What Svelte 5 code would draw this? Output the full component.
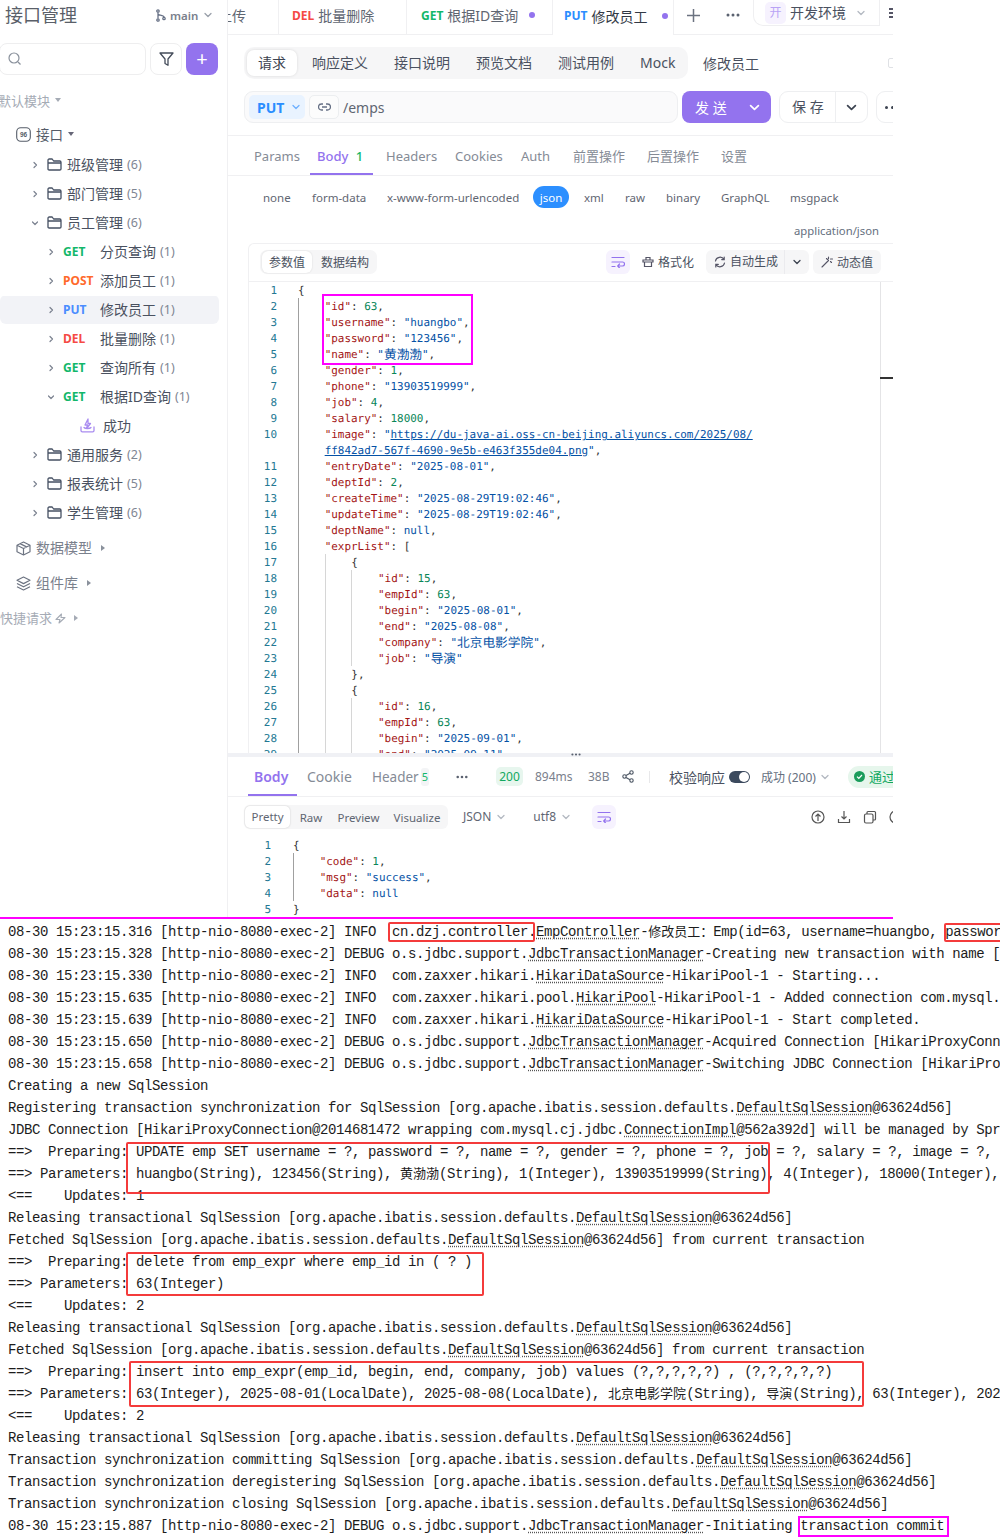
<script>
  const tree = [
    { k: 'f', open: false, name: '班级管理', c: 6 },
    { k: 'f', open: false, name: '部门管理', c: 5 },
    { k: 'f', open: true, name: '员工管理', c: 6 },
    { k: 'm', m: 'GET', name: '分页查询', c: 1 },
    { k: 'm', m: 'POST', name: '添加员工', c: 1 },
    { k: 'm', m: 'PUT', name: '修改员工', c: 1, sel: true },
    { k: 'm', m: 'DEL', name: '批量删除', c: 1 },
    { k: 'm', m: 'GET', name: '查询所有', c: 1 },
    { k: 'm', m: 'GET', name: '根据ID查询', c: 1, open: true },
    { k: 's', name: '成功' },
    { k: 'f', open: false, name: '通用服务', c: 2 },
    { k: 'f', open: false, name: '报表统计', c: 5 },
    { k: 'f', open: false, name: '学生管理', c: 6 }
  ];
  const reqTabs = ['响应定义', '接口说明', '预览文档', '测试用例', 'Mock'];
  function tok(s) {
    const out = [];
    const re = /("[^"]*")(:?)|(\d+)|(null)|([^"\d n]+|\s+|n)/g;
    let m;
    while ((m = re.exec(s))) {
      if (m[1]) {
        if (m[2]) {
          out.push(['k', m[1]]);
          out.push(['q', ':']);
        } else {
          for (const part of m[1].split(/([\u4e00-\u9fff]+)/)) {
            if (part) out.push([/[\u4e00-\u9fff]/.test(part) ? 'v vz' : 'v', part]);
          }
        }
      } else if (m[3]) out.push(['d', m[3]]);
      else if (m[4]) out.push(['v', m[4]]);
      else out.push(['q', m[0]]);
    }
    return out;
  }
  const reqRaw = [
    [1, 0, '{'], [2, 1, '"id": 63,'], [3, 1, '"username": "huangbo",'], [4, 1, '"password": "123456",'],
    [5, 1, '"name": "黄渤渤",'], [6, 1, '"gender": 1,'], [7, 1, '"phone": "13903519999",'], [8, 1, '"job": 4,'],
    [9, 1, '"salary": 18000,'], [10, 1, 'URL1'], ['', 1, 'URL2'], [11, 1, '"entryDate": "2025-08-01",'],
    [12, 1, '"deptId": 2,'], [13, 1, '"createTime": "2025-08-29T19:02:46",'], [14, 1, '"updateTime": "2025-08-29T19:02:46",'],
    [15, 1, '"deptName": null,'], [16, 1, '"exprList": ['], [17, 2, '{'], [18, 3, '"id": 15,'], [19, 3, '"empId": 63,'],
    [20, 3, '"begin": "2025-08-01",'], [21, 3, '"end": "2025-08-08",'], [22, 3, '"company": "北京电影学院",'], [23, 3, '"job": "导演"'],
    [24, 2, '},'], [25, 2, '{'], [26, 3, '"id": 16,'], [27, 3, '"empId": 63,'], [28, 3, '"begin": "2025-09-01",'], [29, 3, '"end": "2025-09-11",']
  ];
  const reqRows = reqRaw.map(([n, ind, t]) => ({
    n, ind,
    toks: t === 'URL1'
      ? [['k', '"image"'], ['q', ': '], ['v', '"'], ['u', 'https://du-java-ai.oss-cn-beijing.aliyuncs.com/2025/08/']]
      : t === 'URL2'
        ? [['u', 'ff842ad7-567f-4690-9e5b-e463f355de04.png'], ['v', '"'], ['q', ',']]
        : tok(t)
  }));
  const resRows = [
    [1, 0, '{'], [2, 1, '"code": 1,'], [3, 1, '"msg": "success",'], [4, 1, '"data": null'], [5, 0, '}']
  ].map(([n, ind, t]) => ({ n, ind, toks: tok(t) }));

  const log = [
    ['08-30 15:23:15.316 [http-nio-8080-exec-2] INFO  cn.dzj.controller.', 'EmpController', '-', '修改员工：', 'Emp(id=63, username=huangbo, password=123456, name=黄渤渤'],
    ['08-30 15:23:15.328 [http-nio-8080-exec-2] DEBUG o.s.jdbc.support.', 'JdbcTransactionManager', '-Creating new transaction with name [cn.dzj.service'],
    ['08-30 15:23:15.330 [http-nio-8080-exec-2] INFO  com.zaxxer.hikari.', 'HikariDataSource', '-HikariPool-1 - Starting...'],
    ['08-30 15:23:15.635 [http-nio-8080-exec-2] INFO  com.zaxxer.hikari.pool.', 'HikariPool', '-HikariPool-1 - Added connection com.mysql.cj.jdbc'],
    ['08-30 15:23:15.639 [http-nio-8080-exec-2] INFO  com.zaxxer.hikari.', 'HikariDataSource', '-HikariPool-1 - Start completed.'],
    ['08-30 15:23:15.650 [http-nio-8080-exec-2] DEBUG o.s.jdbc.support.', 'JdbcTransactionManager', '-Acquired Connection [HikariProxyConnection@2014'],
    ['08-30 15:23:15.658 [http-nio-8080-exec-2] DEBUG o.s.jdbc.support.', 'JdbcTransactionManager', '-Switching JDBC Connection [HikariProxyConnection'],
    ['Creating a new SqlSession'],
    ['Registering transaction synchronization for SqlSession [org.apache.ibatis.session.defaults.', 'DefaultSqlSession', '@63624d56]'],
    ['JDBC Connection [HikariProxyConnection@2014681472 wrapping com.mysql.cj.jdbc.', 'ConnectionImpl', '@562a392d] will be managed by Spring'],
    ['==>  Preparing: UPDATE emp SET username = ?, password = ?, name = ?, gender = ?, phone = ?, job = ?, salary = ?, image = ?, dept'],
    ['==> Parameters: huangbo(String), 123456(String), ', '', '', '黄渤渤', '(String), 1(Integer), 13903519999(String), 4(Integer), 18000(Integer), https'],
    ['<==    Updates: 1'],
    ['Releasing transactional SqlSession [org.apache.ibatis.session.defaults.', 'DefaultSqlSession', '@63624d56]'],
    ['Fetched SqlSession [org.apache.ibatis.session.defaults.', 'DefaultSqlSession', '@63624d56] from current transaction'],
    ['==>  Preparing: delete from emp_expr where emp_id in ( ? )'],
    ['==> Parameters: 63(Integer)'],
    ['<==    Updates: 2'],
    ['Releasing transactional SqlSession [org.apache.ibatis.session.defaults.', 'DefaultSqlSession', '@63624d56]'],
    ['Fetched SqlSession [org.apache.ibatis.session.defaults.', 'DefaultSqlSession', '@63624d56] from current transaction'],
    ['==>  Preparing: insert into emp_expr(emp_id, begin, end, company, job) values (?,?,?,?,?) , (?,?,?,?,?)'],
    ['==> Parameters: 63(Integer), 2025-08-01(LocalDate), 2025-08-08(LocalDate), ', '', '', '北京电影学院', '(String), ', '导演', '(String), 63(Integer), 2025-09-01'],
    ['<==    Updates: 2'],
    ['Releasing transactional SqlSession [org.apache.ibatis.session.defaults.', 'DefaultSqlSession', '@63624d56]'],
    ['Transaction synchronization committing SqlSession [org.apache.ibatis.session.defaults.', 'DefaultSqlSession', '@63624d56]'],
    ['Transaction synchronization deregistering SqlSession [org.apache.ibatis.session.defaults.', 'DefaultSqlSession', '@63624d56]'],
    ['Transaction synchronization closing SqlSession [org.apache.ibatis.session.defaults.', 'DefaultSqlSession', '@63624d56]'],
    ['08-30 15:23:15.887 [http-nio-8080-exec-2] DEBUG o.s.jdbc.support.', 'JdbcTransactionManager', '-Initiating transaction commit']
  ];
</script>

{#snippet chev(cls)}
  <svg class={cls} width="10" height="10" viewBox="0 0 10 10" fill="none" stroke="currentColor" stroke-width="1.3" stroke-linecap="round" stroke-linejoin="round"><path d="M2 3.5 5 6.5 8 3.5"/></svg>
{/snippet}
{#snippet wrapIcon()}
  <svg width="14" height="12" viewBox="0 0 14 12" fill="none" stroke="#9373ee" stroke-width="1.2" stroke-linecap="round" stroke-linejoin="round"><path d="M1 1.5h12M1 6h10.5a1.5 1.5 0 0 1 0 4H7M8.5 8 6.7 10l1.8 2M1 10.500h3"/></svg>
{/snippet}
{#snippet threeDots(cls)}
  <svg class={cls} width="14" height="4" viewBox="0 0 14 4" fill="#5b6270"><circle cx="2" cy="2" r="1.500"/><circle cx="7" cy="2" r="1.500"/><circle cx="12" cy="2" r="1.500"/></svg>
{/snippet}
{#snippet rows(list)}
  {#each list as r}
    <div class="row">
      <span class="ln">{r.n}</span>
      <span class="code">{#each Array(r.ind) as _, i}<span class="ind" class:first={i === 0}></span>{/each}{#each r.toks as t}<span class={t[0]}>{t[1]}</span>{/each}</span>
    </div>
  {/each}
{/snippet}

<div class="page">
  <div class="top">
    <aside class="side">
      <div class="s-head">
        <span class="title">接口管理</span>
        <svg class="branch" width="12" height="13" viewBox="0 0 12 13" fill="none" stroke="#667085" stroke-width="1.3"><circle cx="3" cy="2" r="1.2"/><circle cx="3" cy="11" r="1.2"/><circle cx="9" cy="9.500" r="1.200"/><path d="M3 3.500v6M3 5c1 2 6 1 6 3.200"/></svg>
        <span class="main-t">main</span>
        {@render chev('ch-main')}
      </div>
      <div class="s-search">
        <div class="s-input">
          <svg width="14" height="14" viewBox="0 0 14 14" fill="none" stroke="#8a919c" stroke-width="1.2"><circle cx="6" cy="6" r="5"/><path d="m10 10 2.500 2.500"/></svg>
        </div>
        <div class="s-filter">
          <svg width="15" height="14" viewBox="0 0 15 14" fill="none" stroke="#444c5a" stroke-width="1.3" stroke-linejoin="round"><path d="M1 1h13L9 7v6.300L6 11.500V7z"/></svg>
        </div>
        <div class="s-plus">+</div>
      </div>
      <div class="s-mod"><span>默认模块</span><i class="caret-d"></i></div>
      <div class="s-api">
        <svg width="15" height="15" viewBox="0 0 15 15" fill="none" stroke="#555c68" stroke-width="1.100"><rect x=".7" y=".7" width="13.600" height="13.600" rx="4"/><text x="7.500" y="9.800" font-size="6.500" fill="#555c68" stroke="none" text-anchor="middle" font-family="Liberation Sans" font-weight="700">96</text></svg>
        <span>接口</span><i class="caret-d dark"></i>
      </div>
      <div class="tree">
        {#each tree as t}
          {#if t.k === 'f'}
            <div class="t-row f">
              <svg class="arr" class:down={t.open} width="8" height="8" viewBox="0 0 8 8" fill="none" stroke="#7b8290" stroke-width="1.200" stroke-linecap="round" stroke-linejoin="round"><path d="M3 1.500 5.500 4 3 6.500"/></svg>
              <svg class="folder" width="15" height="13" viewBox="0 0 15 13" fill="none" stroke="#465063" stroke-width="1.300" stroke-linejoin="round"><path d="M1 11V2.200C1 1.500 1.500 1 2.200 1h3l1.400 2h6.200c.7 0 1.200.5 1.200 1.200V11c0 .6-.5 1-1.200 1H2.200C1.500 12 1 11.600 1 11zM1 5h13"/></svg>
              <span class="nm">{t.name}</span><span class="ct">({t.c})</span>
            </div>
          {:else if t.k === 'm'}
            <div class="t-row m" class:sel={t.sel}>
              <svg class="arr" class:down={t.open} width="8" height="8" viewBox="0 0 8 8" fill="none" stroke="#7b8290" stroke-width="1.200" stroke-linecap="round" stroke-linejoin="round"><path d="M3 1.500 5.500 4 3 6.500"/></svg>
              <span class="mth {t.m}">{t.m}</span>
              <span class="nm">{t.name}</span><span class="ct">({t.c})</span>
            </div>
          {:else}
            <div class="t-row s">
              <svg width="15" height="15" viewBox="0 0 15 15" fill="none" stroke="#a98cf0" stroke-width="1.300" stroke-linejoin="round" stroke-linecap="round"><path d="M1 9v3.500c0 .8.500 1.300 1.300 1.300h10.400c.8 0 1.300-.5 1.300-1.300V9M4 9.500c1 1.300 6 1.300 7 0M8 1 5 7h2.500L6.500 10.500 10.500 5.500H8z"/></svg>
              <span class="nm">{t.name}</span>
            </div>
          {/if}
        {/each}
      </div>
      <div class="s-sec first">
        <svg width="15" height="15" viewBox="0 0 15 15" fill="none" stroke="#6d7482" stroke-width="1.200" stroke-linejoin="round"><path d="M7.500 1 14 4.300v6.400L7.500 14 1 10.700V4.300zM1 4.300l6.500 3.200L14 4.300M7.500 7.500V14M4 2.600l6.500 3.300"/></svg>
        <span class="nm">数据模型</span><i class="caret-r"></i>
      </div>
      <div class="s-sec">
        <svg width="15" height="15" viewBox="0 0 15 15" fill="none" stroke="#6d7482" stroke-width="1.200" stroke-linejoin="round"><path d="M7.500 1 14 4.300 7.500 7.600 1 4.300zM1 7.500l6.500 3.300L14 7.500M1 10.700 7.500 14l6.500-3.300"/></svg>
        <span class="nm">组件库</span><i class="caret-r"></i>
      </div>
      <div class="s-quick">
        <span class="nm">快捷请求</span>
        <svg width="11" height="11" viewBox="0 0 11 11" fill="none" stroke="#a5abb5" stroke-width="1.100" stroke-linejoin="round"><path d="M6.500 1 1 6.500h4L4 10l6-5.500H6z"/></svg>
        <i class="caret-r"></i>
      </div>
    </aside>

    <main class="main">
      <div class="tabbar">
        <div class="tab t1"><span class="clip">上传</span></div>
        <div class="tab t2"><b class="DEL">DEL</b> <span>批量删除</span></div>
        <div class="tab t3"><b class="GET">GET</b> <span>根据ID查询</span><i class="dot"></i></div>
        <div class="tab t4"><b class="PUTT">PUT</b> <span class="act">修改员工</span><i class="dot"></i></div>
        <svg class="plus" width="13" height="13" viewBox="0 0 13 13" stroke="#6b7280" stroke-width="1.500"><path d="M6.500 0v13M0 6.500h13"/></svg>
        {@render threeDots('tdots')}
        <div class="env">
          <span class="env-chip">开</span><span class="env-t">开发环境</span>
          {@render chev('ch-env')}
        </div>
        <div class="env-more"><i></i><i></i><i></i></div>
      </div>

      <div class="reqrow">
        <div class="reqtabs">
          <span class="rt active">请求</span>
          {#each reqTabs as r}<span class="rt">{r}</span>{/each}
        </div>
        <span class="rname">修改员工</span>
        <span class="ricon"></span>
      </div>

      <div class="urlrow">
        <div class="urlbox">
          <span class="put">PUT {@render chev('ch-put')}</span>
          <span class="link">
            <svg width="13" height="8" viewBox="0 0 13 8" fill="none" stroke="#667085" stroke-width="1.300"><path d="M5 1H3.500a3 3 0 0 0 0 6H5M8 1h1.500a3 3 0 0 1 0 6H8M4 4h5"/></svg>
          </span>
          <span class="path">/emps</span>
        </div>
        <div class="send"><span>发 送</span>{@render chev('ch-send')}</div>
        <div class="save"><span class="save-t">保 存</span><span class="save-c">{@render chev('ch-save')}</span></div>
        <div class="more"><i></i><i></i></div>
      </div>

      <div class="ptabs">
        <span class="pt pa">Params</span>
        <span class="pt pb">Body <em>1</em></span>
        <span class="pt pc">Headers</span>
        <span class="pt pd">Cookies</span>
        <span class="pt pe">Auth</span>
        <span class="pt pf">前置操作</span>
        <span class="pt pg">后置操作</span>
        <span class="pt ph">设置</span>
      </div>

      <div class="btypes">
        <span class="bt b0">none</span><span class="bt b1">form-data</span><span class="bt b2">x-www-form-urlencoded</span>
        <span class="bt b3">json</span><span class="bt b4">xml</span><span class="bt b5">raw</span><span class="bt b6">binary</span>
        <span class="bt b7">GraphQL</span><span class="bt b8">msgpack</span>
      </div>
      <div class="ctype">application/json</div>

      <div class="editor">
        <div class="toolbar">
          <div class="seg">
            <span class="sg active">参数值</span><span class="sg">数据结构</span>
          </div>
          <span class="wrapbtn wb1">{@render wrapIcon()}</span>
          <span class="fmt">
            <svg width="12" height="12" viewBox="0 0 12 12" fill="none" stroke="#556" stroke-width="1.200"><path d="M1 4h10v2H1zM2.500 6v4.500h7V6M4 4V1.500h4V4"/></svg>
            格式化
          </span>
          <span class="auto">
            <span class="auto-l">
              <svg width="12" height="12" viewBox="0 0 12 12" fill="none" stroke="#556" stroke-width="1.200" stroke-linecap="round"><path d="M1.500 5A4.600 4.600 0 0 1 10 3.500M10.500 7A4.600 4.600 0 0 1 2 8.500M10.200 1v2.600H7.700M1.800 11V8.400h2.500"/></svg>
              自动生成
            </span>
            <span class="auto-r">{@render chev('ch-auto')}</span>
          </span>
          <span class="dyn">
            <svg width="12" height="12" viewBox="0 0 12 12" fill="none" stroke="#556" stroke-width="1.100" stroke-linecap="round"><path d="M1 11 7.500 4.500M7.500 1v2M9.500 3h2M5.500 2.500 6.500 3.500M9.500 5.500l1 1"/></svg>
            动态值
          </span>
        </div>
        <div class="req-code">
          {@render rows(reqRows)}
          <i class="ruler"></i>
        </div>
      </div>
      <div class="resizer">{@render threeDots('rzdots')}</div>

      <div class="rtabs">
        <span class="rb">Body</span>
        <span class="rc">Cookie</span>
        <span class="rh">Header</span><em class="rn">5</em>
        {@render threeDots('rdots')}
        <span class="c200">200</span>
        <span class="rm r894">894ms</span>
        <span class="rm r38">38B</span>
        <svg class="share" width="12" height="13" viewBox="0 0 12 13" fill="none" stroke="#4b5563" stroke-width="1.100"><circle cx="9.500" cy="2.500" r="1.700"/><circle cx="2.500" cy="6.500" r="1.700"/><circle cx="9.500" cy="10.500" r="1.700"/><path d="M4 5.600 8 3.300M4 7.400l4 2.300"/></svg>
        <i class="rsep"></i>
        <span class="chk">校验响应</span>
        <span class="toggle"><i></i></span>
        <span class="succ">成功 (200)</span>
        {@render chev('ch-succ')}
        <span class="pass"><svg width="11" height="11" viewBox="0 0 11 11"><circle cx="5.500" cy="5.500" r="5.500" fill="#1a9c5b"/><path d="M3 5.600 4.800 7.300 8 4" fill="none" stroke="#fff" stroke-width="1.200"/></svg>通过</span>
      </div>

      <div class="resbar">
        <div class="rseg">
          <span class="rs active">Pretty</span><span class="rs">Raw</span><span class="rs">Preview</span><span class="rs">Visualize</span>
        </div>
        <span class="rsel s1">JSON</span>{@render chev('ch-s1')}
        <span class="rsel s2">utf8</span>{@render chev('ch-s2')}
        <span class="wrapbtn wb2">{@render wrapIcon()}</span>
        <span class="res-ic">
          <svg width="14" height="14" viewBox="0 0 14 14" fill="none" stroke="#555" stroke-width="1.200"><circle cx="7" cy="7" r="6"/><path d="M7 11V4M4.500 6.500 7 4l2.500 2.500"/></svg>
          <svg width="14" height="14" viewBox="0 0 14 14" fill="none" stroke="#555" stroke-width="1.200"><path d="M7 1v8M4.500 6.500 7 9l2.500-2.500M1.500 9v3.500h11V9"/></svg>
          <svg width="14" height="14" viewBox="0 0 14 14" fill="none" stroke="#555" stroke-width="1.200"><rect x="1.500" y="4" width="8.500" height="9" rx="1.500"/><path d="M4 4V2.500c0-.6.400-1 1-1h6.500c.6 0 1 .4 1 1V9c0 .6-.4 1-1 1H10"/></svg>
          <svg width="14" height="14" viewBox="0 0 14 14" fill="none" stroke="#555" stroke-width="1.200"><circle cx="7" cy="7" r="6"/></svg>
        </span>
      </div>

      <div class="res-code">{@render rows(resRows)}</div>
    </main>
  </div>

  <div class="sep"></div>

  <div class="log">
    {#each log as l}
      <div class="lg">{l[0]}{#if l[1]}<span class="dt">{l[1]}</span>{/if}{#if l[2]}{l[2]}{/if}{#if l[3]}<span class="zh">{l[3]}</span>{/if}{#if l[4]}{l[4]}{/if}{#if l[5]}<span class="zh">{l[5]}</span>{/if}{#if l[6]}{l[6]}{/if}</div>
    {/each}
  </div>

  <i class="box mg a1"></i>
  <i class="box rd a2"></i>
  <i class="box rd a3"></i>
  <i class="box rd a4"></i>
  <i class="box rd a5"></i>
  <i class="box rd a6"></i>
  <i class="box mg a7"></i>
</div>

<style>
  :global(body) { margin: 0; background: #fff; }
  .page {
    position: relative; width: 1000px; height: 1540px; overflow: hidden; background: #fff;
    font-family: "Noto Sans", "Noto Sans CJK SC", sans-serif; color: #4a5160;
  }
  .top { display: flex; width: 893px; height: 917px; overflow: hidden; }
  svg { flex: none; }
  i, em, b { font-style: normal; }

  /* sidebar */
  .side { width: 227px; flex: none; border-right: 1px solid #f0f0f2; overflow: hidden; }
  .s-head { display: flex; align-items: center; height: 30px; padding-left: 5px; }
  .title { font-size: 18px; color: #5a5f69; width: 150px; line-height: 30px; }
  .main-t { font-size: 11.500px; font-weight: 600; color: #7a808c; margin-left: 3px; }
  .ch-main { color: #9aa0aa; margin-left: 5px; }
  .s-search { display: flex; margin-top: 13px; height: 32px; gap: 4px; }
  .s-input {
    width: 147px; margin-left: -1px; box-sizing: border-box; border: 1px solid #eeeeef; border-radius: 8px;
    display: flex; align-items: center; padding-left: 8px;
  }
  .s-filter { width: 32px; box-sizing: border-box; border: 1px solid #eeeeef; border-radius: 8px; display: flex; align-items: center; justify-content: center; }
  .s-plus { width: 32px; background: #9373ee; border-radius: 8px; color: #fff; font-size: 20px; line-height: 31px; text-align: center; }
  .s-mod { display: flex; align-items: center; height: 20px; margin: 15px 0 0 -2px; font-size: 13px; color: #a5abb5; gap: 5px; }
  .caret-d { width: 0; height: 0; border: 3px solid transparent; border-top: 4px solid #a5abb5; border-bottom: 0; }
  .caret-d.dark { border-top-color: #667; }
  .s-api { display: flex; align-items: center; height: 20px; margin: 14px 0 0 16px; font-size: 13.500px; color: #555c68; gap: 5px; }
  .caret-r { width: 0; height: 0; border: 3px solid transparent; border-left: 4px solid #8a919c; border-right: 0; }
  .tree { margin-top: 6px; }
  .t-row { display: flex; align-items: center; height: 29px; font-size: 14px; color: #4a5160; }
  .nm { margin-bottom: 2px; white-space: nowrap; }
  .t-row .ct { font-size: 12.500px; color: #7f8693; margin-left: 4px; margin-bottom: 1px; }
  .t-row.f { padding-left: 31px; }
  .t-row.f .arr { margin-right: 8px; }
  .t-row.f .nm { margin-left: 5px; }
  .t-row.m { padding-left: 47px; margin-right: 8px; }
  .t-row.m .arr { margin-right: 8px; }
  .t-row.sel { background: linear-gradient(#fff 1px, #f2f3f7 1px); border-radius: 6px; }
  .arr.down { transform: rotate(90deg); }
  .mth { width: 37px; flex: none; font-size: 12px; font-weight: 700; }
  .GET { color: #12b76a; } .POST { color: #ff6a2b; } .PUT { color: #4b8dff; } .DEL { color: #f54a45; }
  .PUTT { color: #2a8dff; }
  .t-row.s { padding-left: 80px; gap: 8px; }
  .s-sec { display: flex; align-items: center; height: 20px; margin: 15px 0 0 16px; font-size: 14px; color: #7a808c; gap: 5px; }
  .s-sec.first { margin-top: 11px; }
  .s-sec .caret-r { margin-left: 4px; }
  .s-quick { display: flex; align-items: center; height: 20px; margin-top: 15px; font-size: 13px; color: #a5abb5; gap: 3px; }
  .s-quick .caret-r { margin-left: 5px; border-left-color: #a5abb5; }

  /* main */
  .main { width: 665px; flex: none; overflow: hidden; }
  .tabbar { display: flex; align-items: flex-start; height: 34px; border-bottom: 1px solid #f0f0f2; font-size: 14px; }
  .tabbar > * { flex: none; }
  .tab { height: 34px; box-sizing: border-box; padding-bottom: 4px; display: flex; align-items: center; white-space: nowrap; overflow: hidden; }
  .tab b { font-size: 12px; margin-right: 4px; }
  .tab span { color: #5f6672; }
  .t1 { width: 51px; border-right: 1px solid #f0f0f2; padding-left: 4px; box-sizing: border-box; }
  .clip { margin-left: -14px; }
  .t2 { width: 128px; padding-left: 13px; border-right: 1px solid #f0f0f2; }
  .t3 { width: 145px; padding-left: 14px; }
  .t3 .dot { margin-left: 11px; }
  .t4 { width: 122px; height: 35px; padding-left: 11px; background: #fff; border-left: 1px solid #f0f0f2; border-right: 1px solid #f0f0f2; }
  .tab .act { color: #333a46; }
  .t4 .dot { margin-left: 15px; }
  .dot { width: 6px; height: 6px; border-radius: 50%; background: #9373ee; flex: none; }
  .plus { margin: 9px 0 0 13px; }
  .tdots { margin: 13px 0 0 26px; }
  .env {
    width: 127px; height: 26px; box-sizing: border-box; border: 1px solid #efeff1; border-top: 0;
    border-radius: 0 0 0 10px; display: flex; align-items: center; padding-left: 11px; margin-left: 13px;
  }
  .env-chip { width: 21px; height: 22px; background: #f6f2fe; border-radius: 5px; color: #b9a3f5; font-size: 12px; line-height: 22px; text-align: center; }
  .env-t { margin-left: 4px; font-size: 14px; color: #4a5160; line-height: 22px; }
  .ch-env { color: #b4b9c2; margin-left: 10px; }
  .env-more { display: flex; flex-direction: column; gap: 2px; margin: 8px 0 0 9px; }
  .env-more i { width: 4px; height: 2px; background: #556; }

  .reqrow { display: flex; align-items: center; margin: 12px 0 0 16px; height: 32px; }
  .reqrow > * { flex: none; }
  .reqtabs { width: 444px; height: 32px; box-sizing: border-box; background: #f6f6f7; border-radius: 10px; display: flex; align-items: center; padding-left: 3px; font-size: 14px; }
  .rt { width: 82px; flex: none; text-align: left; color: #4a5160; line-height: 26px; white-space: nowrap; }
  .rt:last-child { width: 48px; }
  .rt.active { width: 50px; margin-right: 15px; text-align: center; background: #fff; border-radius: 7px; box-shadow: 0 0 3px #0000001f; color: #3c4350; }
  .rname { margin-left: 15px; font-size: 14px; color: #4a5160; white-space: nowrap; }
  .ricon { width: 7px; height: 10px; border: 1px solid #dfe1e5; border-radius: 2px; margin-left: 129px; box-sizing: border-box; }

  .urlrow { display: flex; margin: 12px 0 0 16px; height: 32px; }
  .urlrow > * { flex: none; }
  .urlbox { width: 434px; box-sizing: border-box; border: 1px solid #eeeff1; background: #fafafb; border-radius: 9px; display: flex; align-items: center; padding-left: 4px; }
  .put { width: 56px; height: 24px; flex: none; box-sizing: border-box; padding-left: 8px; background: #e9f3ff; border-radius: 5px; color: #2a8dff; font-weight: 700; font-size: 14px; line-height: 23px; display: flex; align-items: center; gap: 7px; }
  .ch-put { color: #6fb0ff; }
  .link { width: 30px; height: 24px; flex: none; box-sizing: border-box; border: 1px solid #eceef0; border-radius: 5px; margin-left: 4px; display: flex; align-items: center; justify-content: center; background: #fcfcfc; }
  .path { margin-left: 4px; font-size: 14px; color: #5f6672; }
  .send { width: 89px; margin-left: 4px; background: #9373ee; border-radius: 8px; color: #fff; font-size: 14px; display: flex; align-items: center; padding-left: 13px; box-sizing: border-box; }
  .ch-send { color: #fff; width: 13px; height: 13px; margin-left: 21px; }
  .save { width: 89px; margin-left: 8px; box-sizing: border-box; border: 1px solid #eeeff1; border-radius: 9px; display: flex; align-items: center; }
  .save-t { width: 56px; padding-left: 12px; box-sizing: border-box; font-size: 14px; color: #4a5160; line-height: 30px; border-right: 1px solid #eeeff1; white-space: nowrap; }
  .save-c { flex: 1; display: flex; justify-content: center; }
  .ch-save { color: #3c4350; width: 13px; height: 13px; }
  .more { width: 40px; margin-left: 8px; box-sizing: border-box; border: 1px solid #eeeff1; border-radius: 9px; display: flex; align-items: center; padding-left: 8px; gap: 3px; }
  .more i { width: 3px; height: 3px; border-radius: 50%; background: #3c4350; }

  .ptabs { margin-top: 12px; border-top: 1px solid #f0f0f2; height: 39px; border-bottom: 1px solid #f0f0f2; display: flex; align-items: center; font-size: 13px; color: #858b96; }
  .pt { white-space: nowrap; height: 39px; line-height: 40px; flex: none; }
  .pa { margin-left: 26px; width: 63px; }
  .pb { width: 69px; color: #9373ee; font-weight: 500; position: relative; }
  .pb em { color: #12b76a; margin-left: 4px; }
  .pb::after { content: ''; position: absolute; left: -7px; width: 63px; bottom: 0; height: 2px; background: #9373ee; }
  .pc { width: 69px; }
  .pd { width: 66px; }
  .pe { width: 52px; }
  .pf { width: 74px; }
  .pg { width: 74px; }

  .btypes { display: flex; align-items: center; margin-top: 10px; height: 22px; font-size: 11.500px; color: #5f6672; padding-left: 35px; }
  .bt { white-space: nowrap; height: 22px; line-height: 24px; flex: none; }
  .b0 { width: 49px; }
  .b1 { width: 75px; }
  .b2 { width: 146px; }
  .b3 { width: 36px; margin-right: 15px; background: #2c8fff; color: #fff; border-radius: 11px; text-align: center; }
  .b4 { width: 41px; }
  .b5 { width: 41px; }
  .b6 { width: 55px; }
  .b7 { width: 69px; }
  .ctype { margin-top: 15px; height: 16px; line-height: 16px; font-size: 11.300px; color: #667080; padding-left: 566px; }

  .editor { margin: 4px 0 0 20px; border: 1px solid #f0f0f2; border-width: 1px 0 0 1px; border-radius: 6px 0 0 0; }
  .toolbar { display: flex; align-items: center; height: 24px; padding: 6px 0 7px 11px; border-bottom: 1px solid #f0f0f2; font-size: 12px; color: #4a5160; }
  .seg { width: 117px; height: 24px; flex: none; box-sizing: border-box; background: #f6f6f7; border-radius: 7px; display: flex; align-items: center; padding-left: 2px; }
  .sg { padding-left: 9px; white-space: nowrap; }
  .sg.active { width: 50px; height: 22px; box-sizing: border-box; padding: 0; background: #fff; border-radius: 6px; text-align: center; line-height: 24px; box-shadow: 0 0 2px #00000022; }
  .wrapbtn { width: 24px; height: 24px; background: #f6f2fe; border-radius: 6px; display: flex; align-items: center; justify-content: center; flex: none; }
  .wb1 { margin-left: 229px; }
  .fmt { display: flex; align-items: center; gap: 4px; margin-left: 12px; width: 52px; flex: none; white-space: nowrap; }
  .auto { display: flex; align-items: center; margin-left: 12px; height: 24px; width: 103px; background: #f6f6f7; border-radius: 6px; flex: none; }
  .auto-l { display: flex; align-items: center; gap: 4px; width: 79px; padding-left: 8px; box-sizing: border-box; border-right: 1px solid #ebebee; line-height: 24px; white-space: nowrap; }
  .auto-r { flex: 1; display: flex; justify-content: center; color: #3c4350; }
  .dyn { display: flex; align-items: center; gap: 4px; margin-left: 4px; height: 24px; width: 68px; box-sizing: border-box; padding-left: 8px; background: #f6f6f7; border-radius: 6px; white-space: nowrap; flex: none; }

  .req-code { height: 471px; overflow: hidden; position: relative; }
  .ruler { position: absolute; left: 631px; top: 0; bottom: 0; width: 1px; background: #e4e4e6; }
  .ruler::after { content: ''; position: absolute; left: 0; top: 95px; width: 13px; height: 2px; background: #333; }
  .row { display: flex; height: 16px; line-height: 18px; font-family: "DejaVu Sans Mono", "Noto Sans CJK SC", monospace; font-size: 10.950px; white-space: pre; text-rendering: geometricPrecision; }
  .ln { width: 28px; text-align: right; color: #237893; flex: none; }
  .code { margin-left: 21px; display: flex; height: 16px; }
  .ind { width: 26.670px; height: 16px; flex: none; box-sizing: border-box; border-left: 1px solid #d6d6d6; }
  .ind.first { border-left-color: #a0a0a0; }
  .k { color: #a31515; } .v { color: #0451a5; } .d { color: #098658; } .q { color: #333; }
  .vz { font-size: 12.700px; }
  .u { color: #0451a5; text-decoration: underline; }

  .resizer { height: 4px; background: #f0f1f5; position: relative; }
  .rzdots { position: absolute; left: 343px; top: 0; width: 10px; height: 3px; }

  .rtabs { display: flex; align-items: center; height: 39px; border-bottom: 1px solid #f0f0f2; font-size: 13px; color: #858b96; white-space: nowrap; }
  .rtabs > * { flex: none; }
  .rb { margin-left: 26px; width: 53px; color: #9373ee; font-weight: 600; position: relative; line-height: 39px; font-size: 14px; }
  .rb::after { content: ''; position: absolute; left: -6px; right: 10px; bottom: 0; height: 2px; background: #9373ee; }
  .rc { width: 65px; font-size: 14px; }
  .rh { width: 49px; font-size: 13.500px; }
  .rn { width: 8px; font-size: 11px; color: #12b76a; background: #f3f4f6; border-radius: 3px; text-align: center; line-height: 18px; }
  .rdots { margin-left: 27px; width: 12px; }
  .c200 { margin-left: 28px; width: 27px; height: 19px; background: #e7f6ee; color: #12a860; border-radius: 5px; font-size: 12px; line-height: 19px; text-align: center; }
  .rm { font-size: 12px; color: #7a808c; }
  .r894 { margin-left: 12px; width: 53px; }
  .r38 { width: 21px; }
  .share { margin-left: 13px; }
  .rsep { width: 1px; height: 12px; background: #e8e8ea; margin-left: 15px; }
  .chk { margin-left: 19px; width: 60px; color: #4a5160; font-size: 14px; }
  .toggle { width: 21px; height: 12px; border-radius: 7px; background: #3c4a5e; position: relative; }
  .toggle i { position: absolute; right: 1px; top: 1px; width: 10px; height: 10px; border-radius: 50%; background: #fff; }
  .succ { margin-left: 11px; width: 59px; font-size: 12px; color: #667080; }
  .ch-succ { color: #b4b9c2; }
  .pass { margin-left: 18px; width: 60px; height: 22px; background: #e6f6ec; border-radius: 11px; display: flex; align-items: center; gap: 4px; padding-left: 6px; box-sizing: border-box; font-size: 13px; color: #12a860; }

  .resbar { display: flex; align-items: center; margin: 8px 0 0 16px; height: 24px; font-size: 11.500px; color: #5f6672; white-space: nowrap; }
  .resbar > * { flex: none; }
  .rseg { width: 204px; height: 24px; background: #f6f6f7; border-radius: 6px; display: flex; align-items: center; box-sizing: border-box; padding-left: 1px; }
  .rs { width: 38px; text-align: center; flex: none; }
  .rs:nth-child(3) { width: 57px; }
  .rs:nth-child(4) { width: 60px; }
  .rs.active { width: 45px; margin-right: 2px; height: 22px; background: #fff; border-radius: 5px; line-height: 22px; box-shadow: 0 0 2px #00000030; }
  .rsel { line-height: 24px; font-size: 12px; }
  .s1 { margin-left: 15px; }
  .ch-s1 { color: #b4b9c2; margin-left: 5px; }
  .s2 { margin-left: 27px; }
  .ch-s2 { color: #b4b9c2; margin-left: 5px; }
  .wb2 { margin-left: 21px; }
  .res-ic { display: flex; align-items: center; gap: 12px; margin-left: 195px; }

  .res-code { margin-top: 8px; }
  .res-code .ln { width: 43px; }
  .res-code .code { margin-left: 22px; }

  .sep { width: 893px; height: 2px; background: #f0f; }

  .log { margin-top: 2px; font-family: "Liberation Mono", "Noto Sans CJK SC", monospace; font-size: 14px; letter-spacing: -0.4px; color: #1c1c1c; padding-left: 8px; white-space: pre; }
  .lg { height: 22px; line-height: 22px; overflow: hidden; }
  .dt { text-decoration: underline dotted #555; text-underline-offset: 2px; }
  .zh { font-size: 13px; letter-spacing: 0; }

  .box { position: absolute; box-sizing: border-box; border: 2px solid; border-radius: 2px; pointer-events: none; }
  .rd { border-color: #f43b3b; }
  .mg { border-color: #f0f; border-radius: 0; }
  .a1 { left: 322px; top: 294px; width: 151px; height: 71px; }
  .a2 { left: 388px; top: 922px; width: 147px; height: 20px; }
  .a3 { left: 944px; top: 923px; width: 70px; height: 19px; }
  .a4 { left: 126px; top: 1142px; width: 644px; height: 52px; }
  .a5 { left: 126px; top: 1252px; width: 358px; height: 44px; }
  .a6 { left: 129px; top: 1361px; width: 735px; height: 46px; }
  .a7 { left: 798px; top: 1516px; width: 151px; height: 21px; }
</style>
